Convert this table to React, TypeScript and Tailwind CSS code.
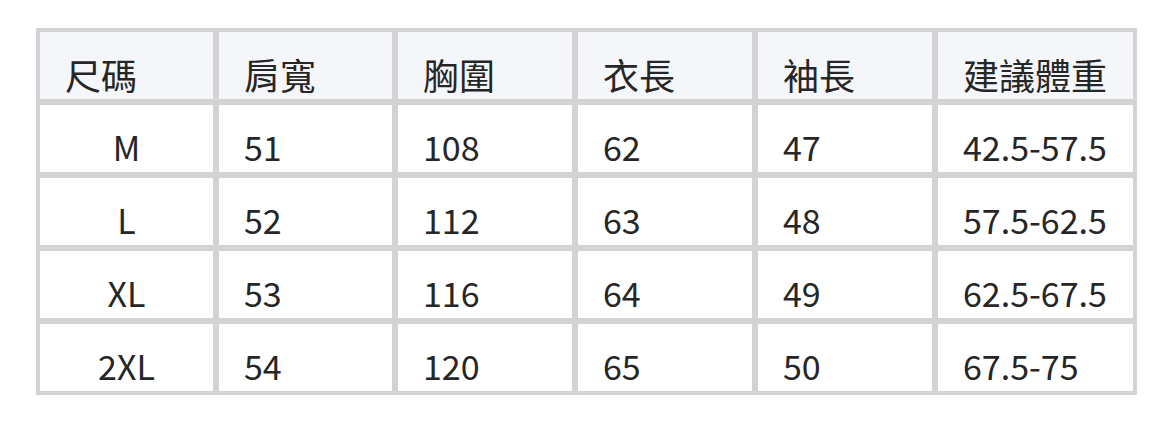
import React from "react";

const headers = ["尺碼", "肩寬", "胸圍", "衣長", "袖長", "建議體重"];
const rows = [
  ["M", "51", "108", "62", "47", "42.5-57.5"],
  ["L", "52", "112", "63", "48", "57.5-62.5"],
  ["XL", "53", "116", "64", "49", "62.5-67.5"],
  ["2XL", "54", "120", "65", "50", "67.5-75"],
];

export default function App() {
  return (
    <div
      className="w-[1172px] h-[422px] bg-white pt-[28px] pl-[36px]"
      style={{ fontFamily: '"Noto Sans CJK TC", "Noto Sans", sans-serif' }}
    >
      <div className="w-[1101px] bg-[#d3d3d3] p-[4px] grid grid-cols-[173px_173px_174px_174px_174px_195px] auto-rows-[67px] gap-[6px] text-[34px] leading-none text-[#262626]">
        {headers.map((h) => (
          <div key={h} className="bg-[#f5f6fa] flex items-end pb-[7px] pl-[25px] text-[36px]">
            {h}
          </div>
        ))}
        {rows.map((r) =>
          r.map((c, i) => (
            <div
              key={r[0] + i}
              className={
                i === 0
                  ? "bg-white flex items-end justify-center pb-[8px]"
                  : "bg-white flex items-end pb-[8px] pl-[25px]"
              }
            >
              {c}
            </div>
          ))
        )}
      </div>
    </div>
  );
}
